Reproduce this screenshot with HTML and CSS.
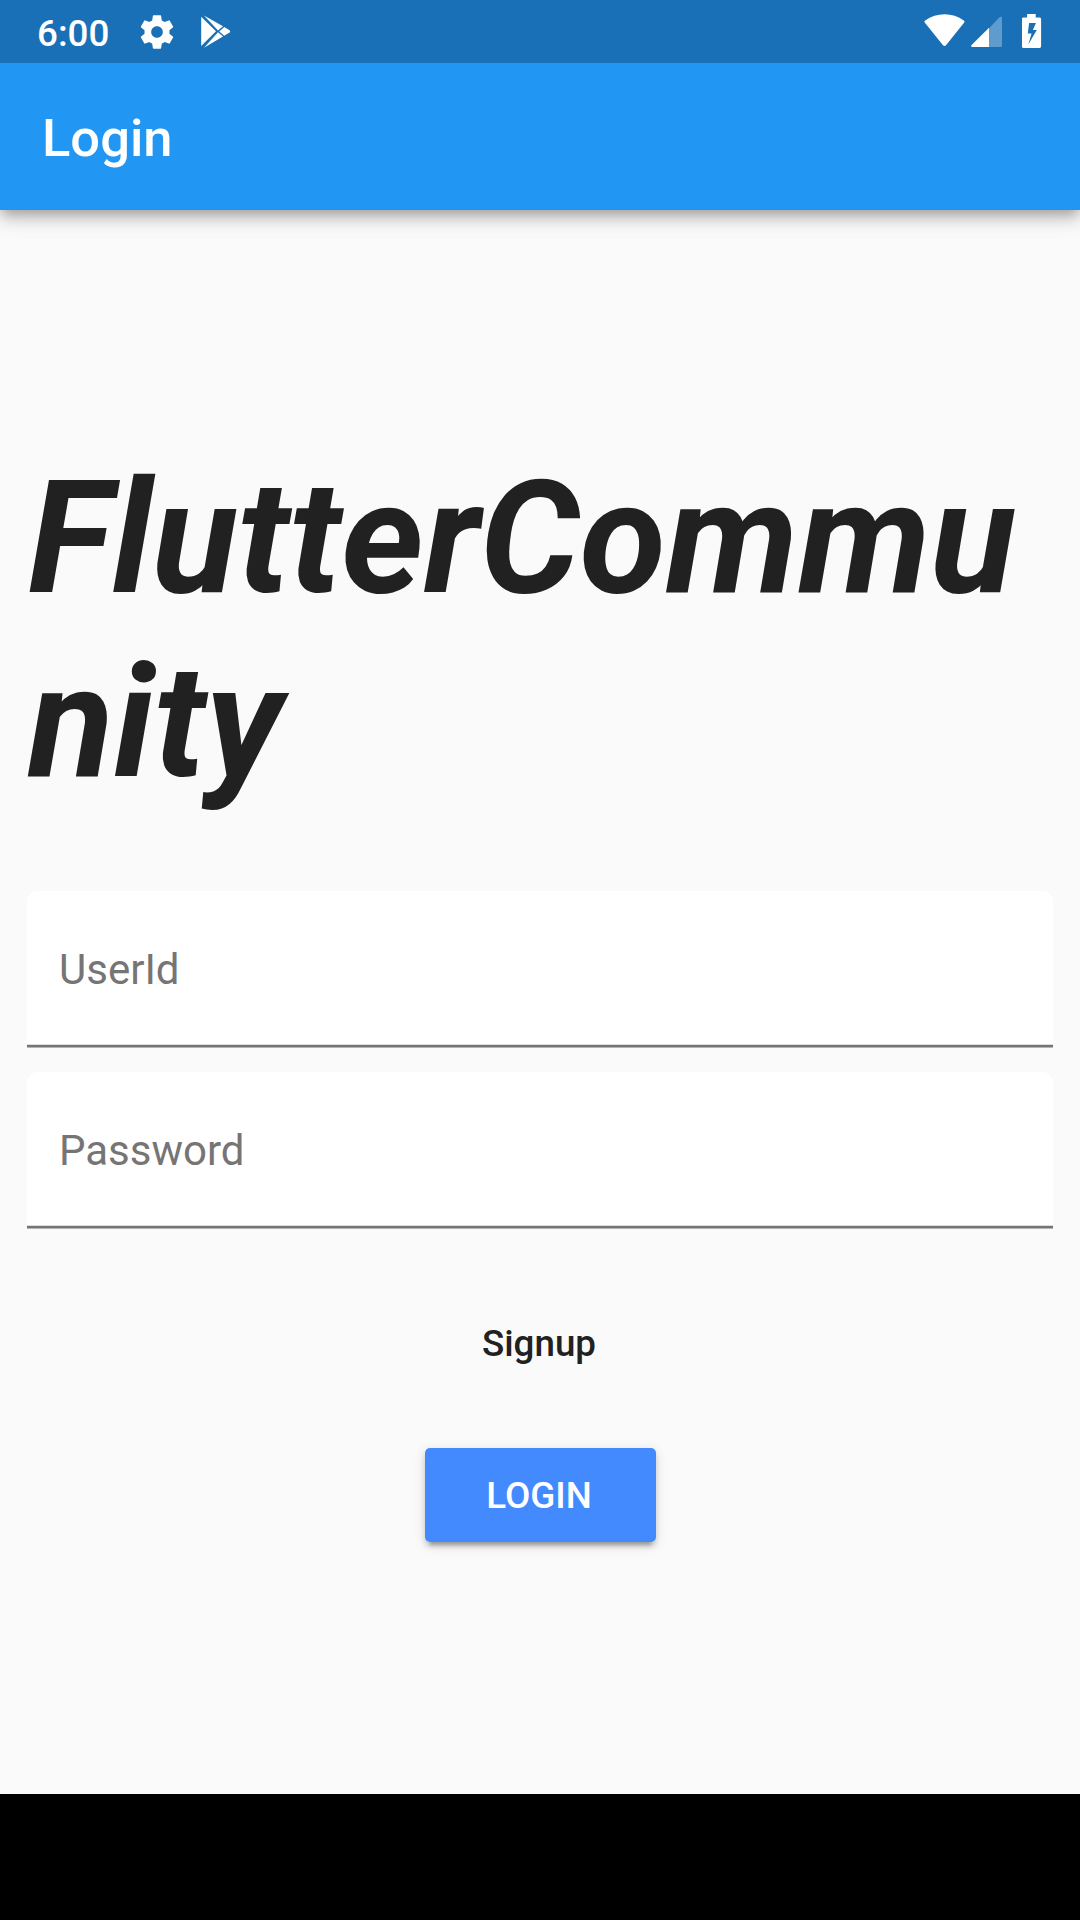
FILE: index.html
```html
<!DOCTYPE html>
<html lang="en">
<head>
<meta charset="utf-8">
<title>Login</title>
<link rel="stylesheet" href="styles.css">
</head>
<body>
<div class="screen">
  <header class="top">
    <div class="status-bar">
      <span class="clock">6:00</span>
      <svg class="icon-gear" viewBox="0 0 24 24"><path d="M19.43 12.98c.04-.32.07-.64.07-.98s-.03-.66-.07-.98l2.11-1.65c.19-.15.24-.42.12-.64l-2-3.46c-.12-.22-.39-.3-.61-.22l-2.49 1c-.52-.4-1.08-.73-1.69-.98l-.38-2.65C14.46 2.18 14.25 2 14 2h-4c-.25 0-.46.18-.49.42l-.38 2.65c-.61.25-1.17.59-1.69.98l-2.49-1c-.23-.09-.49 0-.61.22l-2 3.46c-.13.22-.07.49.12.64l2.11 1.65c-.04.32-.07.65-.07.98s.03.66.07.98l-2.11 1.65c-.19.15-.24.42-.12.64l2 3.46c.12.22.39.3.61.22l2.49-1c.52.4 1.08.73 1.69.98l.38 2.65c.03.24.24.42.49.42h4c.25 0 .46-.18.49-.42l.38-2.65c.61-.25 1.17-.59 1.69-.98l2.49 1c.23.09.49 0 .61-.22l2-3.46c.12-.22.07-.49-.12-.64l-2.11-1.65zM12 15.5c-1.93 0-3.5-1.57-3.5-3.5s1.57-3.5 3.5-3.5 3.5 1.57 3.5 3.5-1.57 3.5-3.5 3.5z"/></svg>
      <svg class="icon-play" viewBox="0 0 30 34"><path d="M.2 1.8 15 16.2.2 31Z"/><path d="M3 .5 22 11.3 17 15.6Z"/><path d="M3 32.8 17 17.2 22 21.4Z"/><path d="M18.3 16.4 23.2 12 28.6 15.2Q30 16.4 28.6 17.6L23.2 20.8Z"/></svg>
      <div class="system-icons">
        <svg class="icon-wifi" viewBox="0.4 0 42 34"><path d="M1.3 8.8Q.2 7.5 1.6 6.5C13-1.8 29-1.8 40.2 6.5Q41.5 7.5 40.4 8.8L22.4 31.2Q20.9 32.8 19.4 31.2Z"/></svg>
        <svg class="icon-signal" viewBox="0 0 31 32"><path class="dim" d="M18 12.3 28.8 1Q31 0 31 2V29.5Q31 31 29.5 31H18Z"/><path d="M18 11.7V31H1Q-.6 30.4.6 29Z"/></svg>
        <svg class="icon-battery" viewBox="0.4 0 20 34"><path fill-rule="evenodd" d="M5.5 0h8.6v3.5h4Q19.5 3.5 19.5 5v27.3Q19.5 34 18 34H1.8Q.3 34 .3 32.3V5Q.3 3.5 1.8 3.5h3.7ZM7.5 9 6.2 19.5H10L6.7 30.5 15.2 16H11.3L14.3 9Z"/></svg>
      </div>
    </div>
    <div class="app-bar"><h1 class="app-title">Login</h1></div>
  </header>
  <main class="content">
    <h2 class="brand">FlutterCommu<br>nity</h2>
    <form class="login-form">
      <div class="field"><label class="field-label">UserId</label></div>
      <div class="field"><label class="field-label">Password</label></div>
    </form>
    <a class="signup">Signup</a>
    <button class="login-button" type="button">LOGIN</button>
  </main>
  <footer class="nav-bar"></footer>
</div>
</body>
</html>
```

FILE: styles.css
```css
* {
  box-sizing: border-box;
}

body {
  margin: 0;
  font-family: Roboto, sans-serif;
  color: #212121;
}

h1,
h2 {
  margin: 0;
}

svg {
  display: block;
  flex: none;
  fill: #fff;
}

.screen {
  display: flex;
  flex-direction: column;
  width: 1080px;
  height: 1920px;
  background: #fafafa;
  overflow: hidden;
}

.top {
  height: 210px;
  background: #2196f3;
  color: #fff;
  box-shadow: 0 5px 10px -3px rgba(0, 0, 0, 0.2), 0 10px 13px rgba(0, 0, 0, 0.14), 0 3px 26px rgba(0, 0, 0, 0.12);
}

.status-bar {
  display: flex;
  align-items: flex-start;
  height: 63px;
  padding: 12px 38px 0 37px;
  background: #1a70b7;
}

.clock {
  width: 100px;
  font-size: 36.75px;
  font-weight: 500;
  line-height: 43px;
}

.icon-gear {
  width: 40px;
  height: 40px;
}

.icon-play {
  width: 30px;
  height: 34px;
  margin: 3px 0 0 24px;
}

.system-icons {
  display: flex;
  margin-left: auto;
}

.icon-wifi {
  width: 42px;
  height: 34px;
  margin-top: 2px;
}

.icon-signal {
  width: 31px;
  height: 32px;
  margin: 4px 20px 0 5px;
}

.icon-signal .dim {
  opacity: 0.3;
}

.icon-battery {
  width: 20px;
  height: 34px;
  margin-top: 2px;
}

.app-bar {
  display: flex;
  align-items: center;
  height: 147px;
  padding: 2px 0 0 42px;
}

.app-title {
  font-size: 52.5px;
  font-weight: 500;
  line-height: 62px;
}

.content {
  display: flex;
  flex-direction: column;
  align-items: center;
  height: 1584px;
  padding: 236px 27px 0;
}

.brand {
  align-self: stretch;
  padding-left: 1px;
  font-size: 157.5px;
  font-style: italic;
  font-weight: 700;
  line-height: 184px;
  white-space: nowrap;
}

.login-form {
  display: flex;
  flex-direction: column;
  gap: 24px;
  width: 100%;
  margin-top: 77px;
}

.field {
  display: flex;
  align-items: center;
  height: 157px;
  padding-left: 32px;
  border-radius: 10px 10px 0 0;
  background: linear-gradient(transparent 153px, #dcdcdc 153px 154px, #757575 154px 156px, #b4b4b4 156px) #fff;
}

.field-label {
  font-size: 42px;
  line-height: 50px;
  color: #757575;
}

.signup {
  margin-top: 93px;
  padding-right: 2px;
  font-size: 36.75px;
  font-weight: 500;
  line-height: 43px;
}

.login-button {
  width: 231px;
  height: 94px;
  margin-top: 83px;
  padding: 1px 2px 0 0;
  border: 0;
  border-radius: 5px;
  background: #448aff;
  color: #fff;
  font: 500 36.75px/43px Roboto, sans-serif;
  box-shadow: 0 8px 3px -5px rgba(0, 0, 0, 0.2), 0 5px 5px rgba(0, 0, 0, 0.14), 0 3px 13px rgba(0, 0, 0, 0.12);
}

.nav-bar {
  height: 126px;
  background: #000;
}
```
